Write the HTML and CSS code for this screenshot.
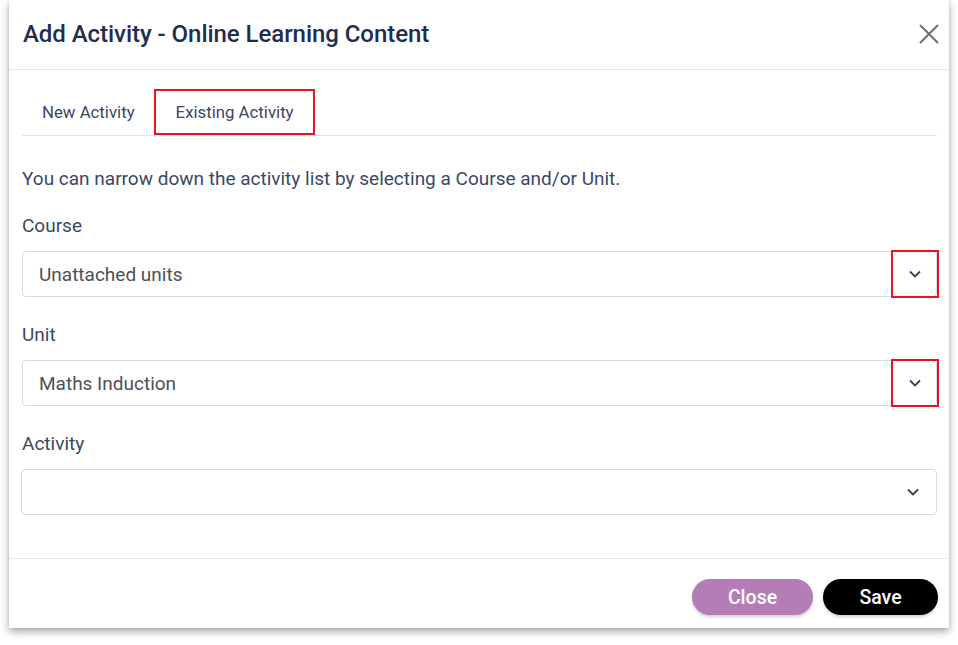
FILE: index.html
```html
<!DOCTYPE html>
<html lang="en">
<head>
<meta charset="utf-8">
<title>Add Activity - Online Learning Content</title>
<link rel="stylesheet" href="styles.css">
</head>
<body>
<div class="modal">
  <div class="modal-header">
    <h1 class="modal-title">Add Activity - Online Learning Content</h1>
    <button class="close-x" aria-label="Close">
      <svg width="20" height="20" viewBox="0 0 20 20"><path d="M1 1 L19 19 M19 1 L1 19" stroke="#6e6e6e" stroke-width="2" fill="none"/></svg>
    </button>
  </div>
  <div class="modal-body">
    <div class="tabs">
      <div class="tab">New Activity</div>
      <div class="tab tab-marked">Existing Activity</div>
    </div>
    <p class="desc">You can narrow down the activity list by selecting a Course and/or Unit.</p>
    <div class="field">
      <div class="label">Course</div>
      <div class="select">
        <span class="value">Unattached units</span>
        <span class="chev chev-marked"><svg width="12" height="8" viewBox="0 0 12 8"><path d="M1 1.5 L6 6.5 L11 1.5" stroke="#3a3f4a" stroke-width="1.8" fill="none"/></svg></span>
      </div>
    </div>
    <div class="field">
      <div class="label">Unit</div>
      <div class="select">
        <span class="value">Maths Induction</span>
        <span class="chev chev-marked"><svg width="12" height="8" viewBox="0 0 12 8"><path d="M1 1.5 L6 6.5 L11 1.5" stroke="#3a3f4a" stroke-width="1.8" fill="none"/></svg></span>
      </div>
    </div>
    <div class="field">
      <div class="label">Activity</div>
      <div class="select select-wide">
        <span class="value"></span>
        <span class="chev"><svg width="12" height="8" viewBox="0 0 12 8"><path d="M1 1.5 L6 6.5 L11 1.5" stroke="#3a3f4a" stroke-width="1.8" fill="none"/></svg></span>
      </div>
    </div>
  </div>
  <div class="modal-footer">
    <button class="btn btn-close">Close</button>
    <button class="btn btn-save">Save</button>
  </div>
</div>
</body>
</html>
```

FILE: styles.css
```css
* { box-sizing: border-box; }
html, body { margin: 0; padding: 0; background: #ffffff; }
body {
  font-family: Roboto, "Liberation Sans", Arial, sans-serif;
  width: 958px;
  height: 645px;
  overflow: hidden;
}
.modal {
  margin-left: 9px;
  width: 940px;
  height: 628px;
  background: #fff;
  box-shadow: 0 4px 8px rgba(0,0,0,0.32), 0 0 3px rgba(0,0,0,0.12);
  display: flex;
  flex-direction: column;
}
.modal-header {
  height: 70px;
  border-bottom: 1px solid #e6e8ee;
  display: flex;
  align-items: center;
  justify-content: space-between;
  padding: 0 10px 1px 14px;
}
.modal-title {
  margin: 0;
  font-size: 24px;
  font-weight: 500;
  color: #1f2d50;
  letter-spacing: -0.05px;
}
.close-x {
  border: 0;
  background: none;
  padding: 0;
  width: 20px;
  height: 20px;
  display: flex;
}
.modal-body {
  flex: 1;
  padding: 19px 12px 0 13px;
  border-bottom: 1px solid #e6e8ee;
}
.tabs {
  display: flex;
  border-bottom: 1px solid #e2e4ea;
  height: 47px;
}
.tab {
  height: 46px;
  padding: 0 20px;
  display: flex;
  align-items: center;
  font-size: 16.8px;
  color: #3a4764;
}
.tab-marked {
  border: 2px solid #e8131f;
  padding: 0 19px 0 20px;
  margin-left: -1px;
}
.desc {
  margin: 31px 0 0;
  font-size: 19px;
  line-height: 24px;
  color: #3b4866;
}
.field { margin-top: 23px; }
.field + .field { margin-top: 26px; }
.label {
  font-size: 19px;
  line-height: 24px;
  color: #3b4866;
  margin-bottom: 13px;
}
.select {
  position: relative;
  height: 46px;
  border: 1px solid #d6dae1;
  border-radius: 4px;
  display: flex;
  align-items: center;
  padding-left: 16px;
}
.select-wide { margin-left: -1px; }
.value {
  flex: 1;
  font-size: 19px;
  color: #4d5058;
}
.chev {
  width: 46px;
  height: 46px;
  display: flex;
  align-items: center;
  justify-content: center;
}
.chev-marked {
  position: absolute;
  right: -3px;
  top: -2px;
  width: 48px;
  height: 48px;
  border: 2px solid #e8131f;
}
.modal-footer {
  height: 69px;
  display: flex;
  justify-content: flex-end;
  align-items: flex-start;
  gap: 10px;
  padding: 20px 11px 0 0;
}
.btn {
  height: 36px;
  border: 0;
  border-radius: 18px;
  font-family: Roboto, "Liberation Sans", Arial, sans-serif;
  font-size: 19.5px;
  font-weight: 500;
  color: #fff;
  box-shadow: 0 2px 3px rgba(0,0,0,0.18);
}
.btn-close { width: 121px; background: #b47db7; }
.btn-save { width: 115px; background: #000; }
```
